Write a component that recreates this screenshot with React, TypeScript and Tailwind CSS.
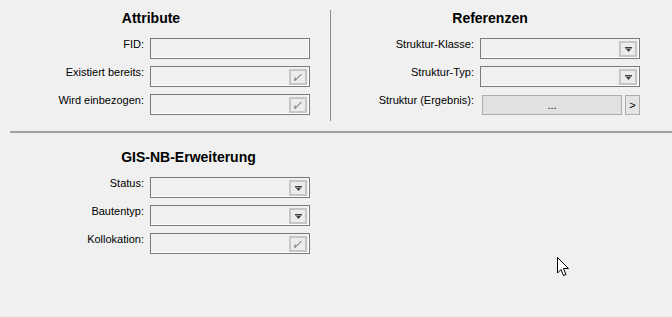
import React from "react";

function DropIcon() {
  return (
    <svg width="7" height="5" viewBox="0 0 7 5">
      <path d="M0 0h7v1.5H0z M1 2h5L3.5 5z" fill="#404040" />
    </svg>
  );
}

function CheckIcon() {
  return (
    <svg width="10" height="10" viewBox="0 0 10 10">
      <path d="M2 5.5 V8.5 L8.5 2" stroke="#5a5a5a" strokeWidth="1" fill="none" />
    </svg>
  );
}

function Field({ kind }: { kind?: "drop" | "check" }) {
  return (
    <div className="w-[160px] h-[21px] border border-[#7a7a7a] shadow-[inset_-1px_-1px_0_#ffffff] bg-[#f0f0f0] flex justify-end pt-[2px] pr-[2px]">
      {kind && (
        <div className="w-[18px] h-[16px] border-2 border-[#c6c6c6] bg-[#ececec] flex items-center justify-center">
          {kind === "drop" ? <DropIcon /> : <CheckIcon />}
        </div>
      )}
    </div>
  );
}

function Row({
  label,
  labelW,
  children,
}: {
  label: string;
  labelW: string;
  children: React.ReactNode;
}) {
  return (
    <div className="flex h-[28px]">
      <div className={`${labelW} text-right text-[11px] leading-[13px] text-black`}>{label}</div>
      <div className="ml-[6px]">{children}</div>
    </div>
  );
}

function Heading({ children, className }: { children: React.ReactNode; className: string }) {
  return (
    <div className={`${className} h-[16px] leading-[16px] text-[14px] font-bold text-black text-center mb-[12px]`}>
      {children}
    </div>
  );
}

export default function App() {
  return (
    <div className="relative w-[672px] h-[317px] overflow-hidden bg-[#f0f0f0] font-['Liberation_Sans',Arial,sans-serif]">
      {/* upper area */}
      <div className="flex h-[131px]">
        <div className="w-[330px] pt-[10px]">
          <Heading className="w-[310px] pr-[8px]">Attribute</Heading>
          <Row label="FID:" labelW="w-[144px]">
            <Field />
          </Row>
          <Row label="Existiert bereits:" labelW="w-[144px]">
            <Field kind="check" />
          </Row>
          <Row label="Wird einbezogen:" labelW="w-[144px]">
            <Field kind="check" />
          </Row>
        </div>

        <div className="w-px h-[111px] mt-[10px] bg-[#8a8a8a]" />

        <div className="pt-[10px]">
          <Heading className="w-[309px] pl-[9px]">Referenzen</Heading>
          <Row label="Struktur-Klasse:" labelW="w-[143px]">
            <Field kind="drop" />
          </Row>
          <Row label="Struktur-Typ:" labelW="w-[143px]">
            <Field kind="drop" />
          </Row>
          <Row label="Struktur (Ergebnis):" labelW="w-[143px]">
            <div className="flex gap-[3px] mt-px ml-[2px]">
              <div className="w-[140px] h-[20px] border border-[#adadad] bg-[#e1e1e1] flex items-center justify-center text-[11px] leading-[13px] text-black">
                ...
              </div>
              <div className="w-[15px] h-[20px] border border-[#adadad] bg-[#e5e5e5] flex items-center justify-center text-[11px] leading-[13px] text-black">
                &gt;
              </div>
            </div>
          </Row>
        </div>
      </div>

      <div className="ml-[10px] h-[2px] bg-[#a0a0a0]" />

      {/* GIS-NB */}
      <div className="pt-[16px]">
        <Heading className="w-[377px]">GIS-NB-Erweiterung</Heading>
        <Row label="Status:" labelW="w-[144px]">
          <Field kind="drop" />
        </Row>
        <Row label="Bautentyp:" labelW="w-[144px]">
          <Field kind="drop" />
        </Row>
        <Row label="Kollokation:" labelW="w-[144px]">
          <Field kind="check" />
        </Row>
      </div>

      {/* mouse pointer */}
      <svg className="absolute left-[557px] top-[257px]" width="13" height="20" viewBox="0 0 13 20">
        <path
          d="M0.5 0.5 L0.5 16 L4 12.5 L6.5 18.5 L9 17.5 L6.5 11.5 L11.5 11.5 Z"
          fill="#ffffff"
          stroke="#000000"
          strokeWidth="1"
          strokeLinejoin="miter"
        />
      </svg>
    </div>
  );
}
